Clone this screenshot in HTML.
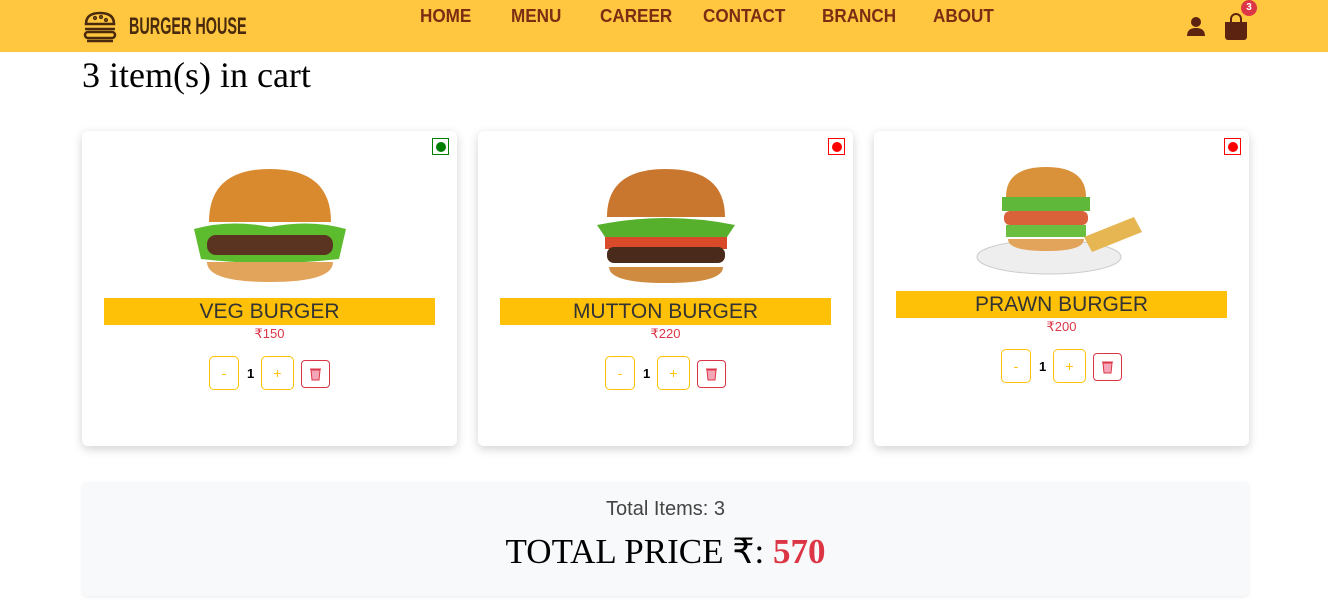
<!DOCTYPE html>
<html><head><meta charset="utf-8"><style>
*{margin:0;padding:0;box-sizing:border-box}
body{width:1328px;height:610px;background:#fff;font-family:"Liberation Sans",sans-serif;position:relative;overflow:hidden}
.hdr{position:absolute;left:0;top:0;width:1328px;height:52px;background:#ffc640}
.nav a{position:absolute;top:6px;font-weight:bold;font-size:18px;color:#7b2c12;text-decoration:none;transform:scaleX(.95);transform-origin:left}
.logo{position:absolute;left:129px;top:13px;font-size:24px;font-weight:bold;color:#4a2a0c;transform:scaleX(.6);transform-origin:left}
h1{position:absolute;left:82px;top:54px;font-family:"Liberation Serif",serif;font-weight:normal;font-size:36px}
.card{position:absolute;top:131px;width:375px;height:315px;background:#fff;border-radius:6px;box-shadow:0 3px 10px rgba(0,0,0,.18)}
.dot{position:absolute;right:8px;top:7px;width:17px;height:17px;border:1px solid;background:#fff}
.dot i{position:absolute;left:3px;top:3px;width:10px;height:10px;border-radius:50%}
.title{position:absolute;left:22px;width:331px;height:27px;background:#ffc107;text-align:center;font-size:21px;line-height:28px;color:#333;font-weight:300}
.price{position:absolute;left:0;width:100%;text-align:center;font-size:13px;color:#dc3545}
.btn{position:absolute;width:30px;height:34px;border:1px solid #ffc107;border-radius:5px;color:#ffc107;text-align:center;line-height:32px;font-size:14px}
.qty{position:absolute;font-weight:bold;font-size:13px}
.del{position:absolute;width:29px;height:28px;border:1px solid #dc3545;border-radius:4px}
.sum{position:absolute;left:82px;top:482px;width:1167px;height:114px;background:#f8f9fa;border-radius:5px;box-shadow:0 1px 3px rgba(0,0,0,.08);text-align:center}
</style></head><body>
<div class="hdr">
<svg style="position:absolute;left:82px;top:10px" width="36" height="36" viewBox="0 0 36 36" fill="none" stroke="#4a2a0c" stroke-width="2.6"><path d="M4 14 Q4 3 18 3 Q32 3 32 14 Z"/><path d="M3 19h30"/><rect x="3" y="22" width="30" height="6" rx="3"/><path d="M5 31h26"/><circle cx="13" cy="8" r=".8"/><circle cx="19" cy="7" r=".8"/><circle cx="24" cy="10" r=".8"/></svg>
<div class="logo">BURGER HOUSE</div>
<div class="nav"><a style="left:420px">HOME</a><a style="left:511px">MENU</a><a style="left:600px">CAREER</a><a style="left:703px">CONTACT</a><a style="left:822px">BRANCH</a><a style="left:933px">ABOUT</a></div>
<svg style="position:absolute;left:1186px;top:16px" width="20" height="20" viewBox="0 0 20 20" fill="#5c2410"><circle cx="10" cy="6" r="5"/><path d="M1 20Q1 12 10 12Q19 12 19 20Z"/></svg>
<svg style="position:absolute;left:1224px;top:13px" width="24" height="27" viewBox="0 0 24 27"><path d="M7 9V6a5 5 0 0 1 10 0v3" fill="none" stroke="#5c2410" stroke-width="2"/><path d="M1 9h22v15a3 3 0 0 1-3 3H4a3 3 0 0 1-3-3Z" fill="#5c2410"/></svg>
<div style="position:absolute;left:1241px;top:0;width:16px;height:16px;border-radius:50%;background:#dc3545;color:#fff;font-size:10px;font-weight:bold;text-align:center;line-height:15px">3</div>
</div>
<h1>3 item(s) in cart</h1>

<div class="card" style="left:82px"><div class="dot" style="border-color:green"><i style="background:green"></i></div>
<svg style="position:absolute;left:107px;top:36px" width="162" height="118" viewBox="0 0 162 118"><path d="M20 55Q20 2 81 2Q142 2 142 55Z" fill="#d9892e"/><path d="M5 62Q40 52 81 60Q122 52 157 62L150 92Q81 100 12 92Z" fill="#5dbb2e"/><rect x="18" y="68" width="126" height="20" rx="9" fill="#5b3421"/><path d="M18 95h126q0 20-63 20t-63-20Z" fill="#e2a35a"/></svg>
<div class="title" style="top:167px">VEG BURGER</div><div class="price" style="top:195px">₹150</div>
<div class="btn" style="left:127px;top:225px">-</div><div class="qty" style="left:165px;top:235px">1</div><div class="btn" style="left:179px;top:225px;width:33px">+</div><div class="del" style="left:219px;top:229px"><svg width="27" height="26" viewBox="0 0 27 26"><path d="M9 9h9l-1 10h-7Z M8 8h11" fill="#f3a6b8" stroke="#dc3545"/></svg></div></div>

<div class="card" style="left:478px"><div class="dot" style="border-color:red"><i style="background:red"></i></div>
<svg style="position:absolute;left:117px;top:36px" width="142" height="118" viewBox="0 0 142 118"><path d="M12 50Q12 2 71 2Q130 2 130 50Z" fill="#c9762f"/><path d="M2 58Q71 44 140 58L132 70H10Z" fill="#56b02b"/><rect x="10" y="70" width="122" height="12" fill="#d84a2a"/><rect x="12" y="80" width="118" height="16" rx="7" fill="#4a2a1a"/><path d="M14 100h114q0 16-57 16t-57-16Z" fill="#cf8b40"/></svg>
<div class="title" style="top:167px">MUTTON BURGER</div><div class="price" style="top:195px">₹220</div>
<div class="btn" style="left:127px;top:225px">-</div><div class="qty" style="left:165px;top:235px">1</div><div class="btn" style="left:179px;top:225px;width:33px">+</div><div class="del" style="left:219px;top:229px"><svg width="27" height="26" viewBox="0 0 27 26"><path d="M9 9h9l-1 10h-7Z M8 8h11" fill="#f3a6b8" stroke="#dc3545"/></svg></div></div>

<div class="card" style="left:874px"><div class="dot" style="border-color:red"><i style="background:red"></i></div>
<svg style="position:absolute;left:100px;top:36px" width="175" height="110" viewBox="0 0 175 110"><ellipse cx="75" cy="90" rx="72" ry="17" fill="#eee" stroke="#ccc"/><path d="M32 30Q32 0 72 0Q112 0 112 30Z" fill="#d9923a"/><rect x="28" y="30" width="88" height="14" fill="#5fb83a"/><rect x="30" y="44" width="84" height="14" rx="6" fill="#d9623a"/><rect x="32" y="58" width="80" height="12" fill="#6bbf40"/><path d="M34 72h76q0 12-38 12t-38-12Z" fill="#e2a35a"/><path d="M110 70l50-20 8 15-50 20Z" fill="#e6b653"/></svg>
<div class="title" style="top:160px">PRAWN BURGER</div><div class="price" style="top:188px">₹200</div>
<div class="btn" style="left:127px;top:218px">-</div><div class="qty" style="left:165px;top:228px">1</div><div class="btn" style="left:179px;top:218px;width:33px">+</div><div class="del" style="left:219px;top:222px"><svg width="27" height="26" viewBox="0 0 27 26"><path d="M9 9h9l-1 10h-7Z M8 8h11" fill="#f3a6b8" stroke="#dc3545"/></svg></div></div>

<div class="sum"><div style="position:absolute;top:16px;width:100%;font-size:20px;color:#444;font-weight:300">Total Items: 3</div>
<div style="position:absolute;top:50px;width:100%;font-family:'Liberation Serif',serif;font-size:35px">TOTAL PRICE ₹: <b style="color:#dc3545">570</b></div></div>
</body></html>
